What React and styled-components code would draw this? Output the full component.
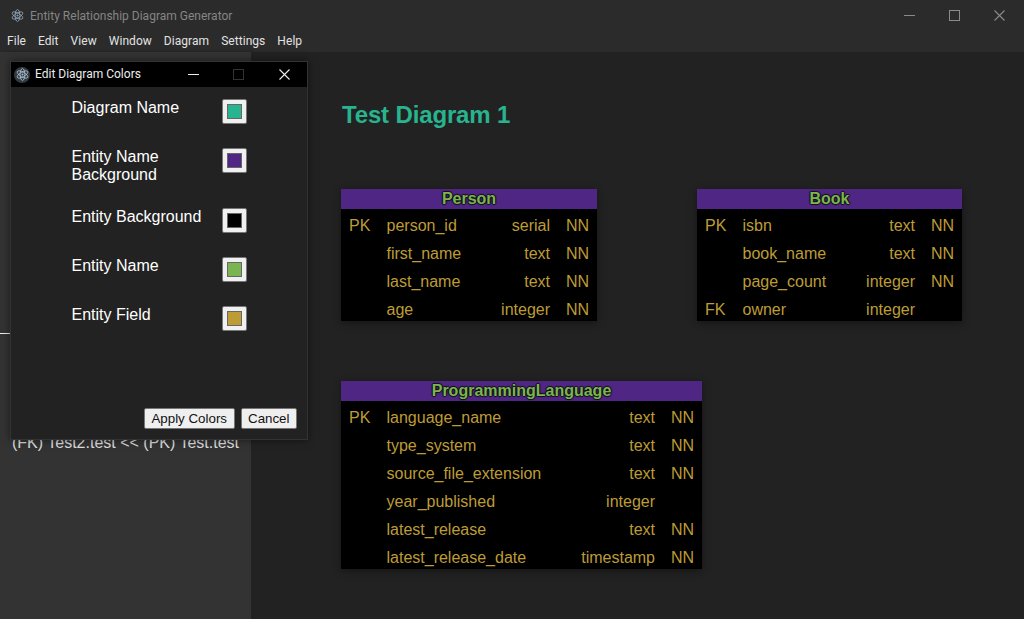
import React from "react";
import styled, { createGlobalStyle } from "styled-components";

const GlobalStyle = createGlobalStyle`
  html, body, #root {
    margin: 0;
    height: 100%;
    overflow: hidden;
  }
  body {
    background: #222;
    font-family: "Liberation Sans", Arial, sans-serif;
  }
`;

const AppWindow = styled.div`
  position: relative;
  display: flex;
  flex-direction: column;
  height: 619px;
  width: 1024px;
  overflow: hidden;
`;

const TitleBar = styled.div`
  display: flex;
  align-items: center;
  height: 30px;
  flex: none;
  background: #2b2b2b;
  color: #858585;
  font: 12px Roboto, sans-serif;
  padding-left: 11px;
  gap: 6px;
`;

const TitleText = styled.span`
  flex: 1;
  padding-top: 2px;
`;

const WindowButtons = styled.div`
  display: flex;
  height: 100%;
  padding-right: 2px;
`;

const WindowButton = styled.div`
  width: 45px;
  display: flex;
  align-items: center;
  justify-content: center;
  color: #8a8a8a;
`;

const MenuBar = styled.div`
  display: flex;
  align-items: center;
  height: 22px;
  flex: none;
  background: #2b2b2b;
  color: #e2e2e2;
  font: 12px Roboto, sans-serif;
  letter-spacing: 0.05px;
  padding-left: 1px;
`;

const MenuItem = styled.div`
  padding: 0 6px;
`;

const Body = styled.div`
  display: flex;
  flex: 1;
  min-height: 0;
`;

const Sidebar = styled.aside`
  width: 251px;
  flex: none;
  background: #333;
  color: #ddd;
  font-size: 16px;
  padding: 382px 0 0 12px;
  box-sizing: border-box;
  white-space: nowrap;
  box-shadow: 1px 0 3px rgba(0, 0, 0, 0.25);
`;

const SidebarDash = styled.div`
  position: absolute;
  left: 0;
  top: 333px;
  width: 11px;
  height: 1px;
  background: #eee;
`;

const Canvas = styled.main`
  position: relative;
  flex: 1;
  background: #222;
`;

const DiagramTitle = styled.h1`
  position: absolute;
  left: 91px;
  top: 49px;
  margin: 0;
  font-size: 24px;
  line-height: 28px;
  font-weight: bold;
  letter-spacing: -0.15px;
  color: #27b48f;
`;

const Entity = styled.div`
  position: absolute;
  left: ${(p) => p.$x}px;
  top: ${(p) => p.$y}px;
  width: ${(p) => p.$w}px;
  background: #000;
  box-shadow: 0 2px 8px rgba(0, 0, 0, 0.4);
`;

const EntityName = styled.div`
  height: 20px;
  line-height: 20px;
  background: #4f2684;
  color: #7ab552;
  font-size: 16px;
  font-weight: bold;
  text-align: center;
  text-shadow: 1px 0 1px #111, -1px 0 1px #111, 0 1px 1px #111, 0 -1px 1px #111;
`;

const Field = styled.div`
  display: grid;
  grid-template-columns: 37.5px 1fr 80px 39px;
  height: 28px;
  line-height: 28px;
  padding: 3px 8px 0;
  box-sizing: border-box;
  color: #bd9c35;
  font-size: 16px;
`;

const FieldType = styled.span`
  text-align: right;
`;

const FieldNull = styled.span`
  text-align: right;
`;

const Dialog = styled.div`
  position: absolute;
  left: 11px;
  top: 62px;
  width: 296px;
  height: 377px;
  display: flex;
  flex-direction: column;
  background: #222;
  box-shadow: 0 0 0 1px #333, 0 0 8px 1px rgba(0, 0, 0, 0.5);
`;

const DialogBar = styled.div`
  display: flex;
  align-items: center;
  height: 25px;
  flex: none;
  background: #000;
  color: #ececec;
  font: 12px Roboto, sans-serif;
  padding-left: 3px;
`;

const DialogTitle = styled.span`
  flex: 1;
  margin-top: -1px;
`;

const DialogButton = styled.div`
  width: 45.5px;
  display: flex;
  align-items: center;
  justify-content: center;
  margin-top: -1px;
`;

const ColorList = styled.div`
  display: flex;
  flex-direction: column;
  gap: 24px;
  padding: 12px 0 0 60.5px;
  flex: 1;
`;

const ColorRow = styled.div`
  display: grid;
  grid-template-columns: 150.5px 25px;
  align-items: start;
`;

const ColorLabel = styled.div`
  width: 135px;
  color: #fff;
  font-size: 16px;
  line-height: 18px;
`;

const Swatch = styled.div`
  width: 25px;
  height: 25px;
  box-sizing: border-box;
  background: #f0f0f0;
  border: 1px solid #777;
  border-radius: 2px;
  padding: 4px;
  &::after {
    content: "";
    display: block;
    height: 100%;
    background: ${(p) => p.$color};
    border: 1px solid #666;
    box-sizing: border-box;
  }
`;

const DialogActions = styled.div`
  display: flex;
  justify-content: flex-end;
  gap: 6px;
  padding: 0 10px 10px 0;
`;

const ActionButton = styled.button`
  height: 21px;
  padding: 0 6.5px;
  background: #efefef;
  border: 1px solid #767676;
  border-radius: 2px;
  color: #111;
  font: 13.33px "Liberation Sans", Arial, sans-serif;
`;

const ElectronIcon = ({ size = 14, color = "#9fb4c8" }) => (
  <svg width={size} height={size} viewBox="0 0 24 24" fill="none" stroke={color} strokeWidth="1.6">
    <ellipse cx="12" cy="12" rx="11" ry="4.4" transform="rotate(30 12 12)" />
    <ellipse cx="12" cy="12" rx="11" ry="4.4" transform="rotate(90 12 12)" />
    <ellipse cx="12" cy="12" rx="11" ry="4.4" transform="rotate(150 12 12)" />
    <circle cx="12" cy="12" r="1.8" fill={color} stroke="none" />
  </svg>
);

const IconBadge = styled.span`
  display: flex;
  align-items: center;
  justify-content: center;
  width: 16px;
  height: 16px;
  margin-right: 5px;
  border-radius: 50%;
  background: #333a42;
`;

const MinimizeIcon = ({ color = "currentColor" }) => (
  <svg width="11" height="11" viewBox="0 0 11 11">
    <path d="M0 5.5h11" stroke={color} strokeWidth="1" />
  </svg>
);

const MaximizeIcon = ({ color = "currentColor" }) => (
  <svg width="11" height="11" viewBox="0 0 11 11" fill="none">
    <rect x="0.5" y="0.5" width="10" height="10" stroke={color} />
  </svg>
);

const CloseIcon = ({ color = "currentColor" }) => (
  <svg width="11" height="11" viewBox="0 0 11 11">
    <path d="M0.5 0.5l10 10M10.5 0.5l-10 10" stroke={color} strokeWidth="1.1" />
  </svg>
);

const menus = ["File", "Edit", "View", "Window", "Diagram", "Settings", "Help"];

const colorOptions = [
  { label: "Diagram Name", color: "#27b48f" },
  { label: "Entity Name Background", color: "#4f2684" },
  { label: "Entity Background", color: "#000000" },
  { label: "Entity Name", color: "#7ab552" },
  { label: "Entity Field", color: "#bd9c35" },
];

const entities = [
  {
    name: "Person",
    x: 341,
    y: 137,
    w: 256,
    fields: [
      ["PK", "person_id", "serial", "NN"],
      ["", "first_name", "text", "NN"],
      ["", "last_name", "text", "NN"],
      ["", "age", "integer", "NN"],
    ],
  },
  {
    name: "Book",
    x: 697,
    y: 137,
    w: 265,
    fields: [
      ["PK", "isbn", "text", "NN"],
      ["", "book_name", "text", "NN"],
      ["", "page_count", "integer", "NN"],
      ["FK", "owner", "integer", ""],
    ],
  },
  {
    name: "ProgrammingLanguage",
    x: 341,
    y: 329,
    w: 361,
    fields: [
      ["PK", "language_name", "text", "NN"],
      ["", "type_system", "text", "NN"],
      ["", "source_file_extension", "text", "NN"],
      ["", "year_published", "integer", ""],
      ["", "latest_release", "text", "NN"],
      ["", "latest_release_date", "timestamp", "NN"],
    ],
  },
];

const App = () => {
  return (
    <AppWindow>
      <GlobalStyle />
      <TitleBar>
        <ElectronIcon size={13} color="#8fa3b5" />
        <TitleText>Entity Relationship Diagram Generator</TitleText>
        <WindowButtons>
          <WindowButton>
            <MinimizeIcon />
          </WindowButton>
          <WindowButton>
            <MaximizeIcon />
          </WindowButton>
          <WindowButton>
            <CloseIcon />
          </WindowButton>
        </WindowButtons>
      </TitleBar>
      <MenuBar>
        {menus.map((m) => (
          <MenuItem key={m}>{m}</MenuItem>
        ))}
      </MenuBar>
      <Body>
        <Sidebar>(FK) Test2.test &lt;&lt; (PK) Test.test</Sidebar>
        <SidebarDash />
        <Canvas>
          <DiagramTitle>Test Diagram 1</DiagramTitle>
          {entities.map((e) => (
            <Entity key={e.name} $x={e.x - 251} $y={e.y} $w={e.w}>
              <EntityName>{e.name}</EntityName>
              {e.fields.map((f) => (
                <Field key={f[1]}>
                  <span>{f[0]}</span>
                  <span>{f[1]}</span>
                  <FieldType>{f[2]}</FieldType>
                  <FieldNull>{f[3]}</FieldNull>
                </Field>
              ))}
            </Entity>
          ))}
        </Canvas>
      </Body>
      <Dialog>
        <DialogBar>
          <IconBadge>
            <ElectronIcon size={13} color="#a9bccd" />
          </IconBadge>
          <DialogTitle>Edit Diagram Colors</DialogTitle>
          <DialogButton>
            <MinimizeIcon color="#eee" />
          </DialogButton>
          <DialogButton>
            <MaximizeIcon color="#333" />
          </DialogButton>
          <DialogButton>
            <CloseIcon color="#eee" />
          </DialogButton>
        </DialogBar>
        <ColorList>
          {colorOptions.map((o) => (
            <ColorRow key={o.label}>
              <ColorLabel>{o.label}</ColorLabel>
              <Swatch $color={o.color} />
            </ColorRow>
          ))}
        </ColorList>
        <DialogActions>
          <ActionButton>Apply Colors</ActionButton>
          <ActionButton>Cancel</ActionButton>
        </DialogActions>
      </Dialog>
    </AppWindow>
  );
};

export default App;
